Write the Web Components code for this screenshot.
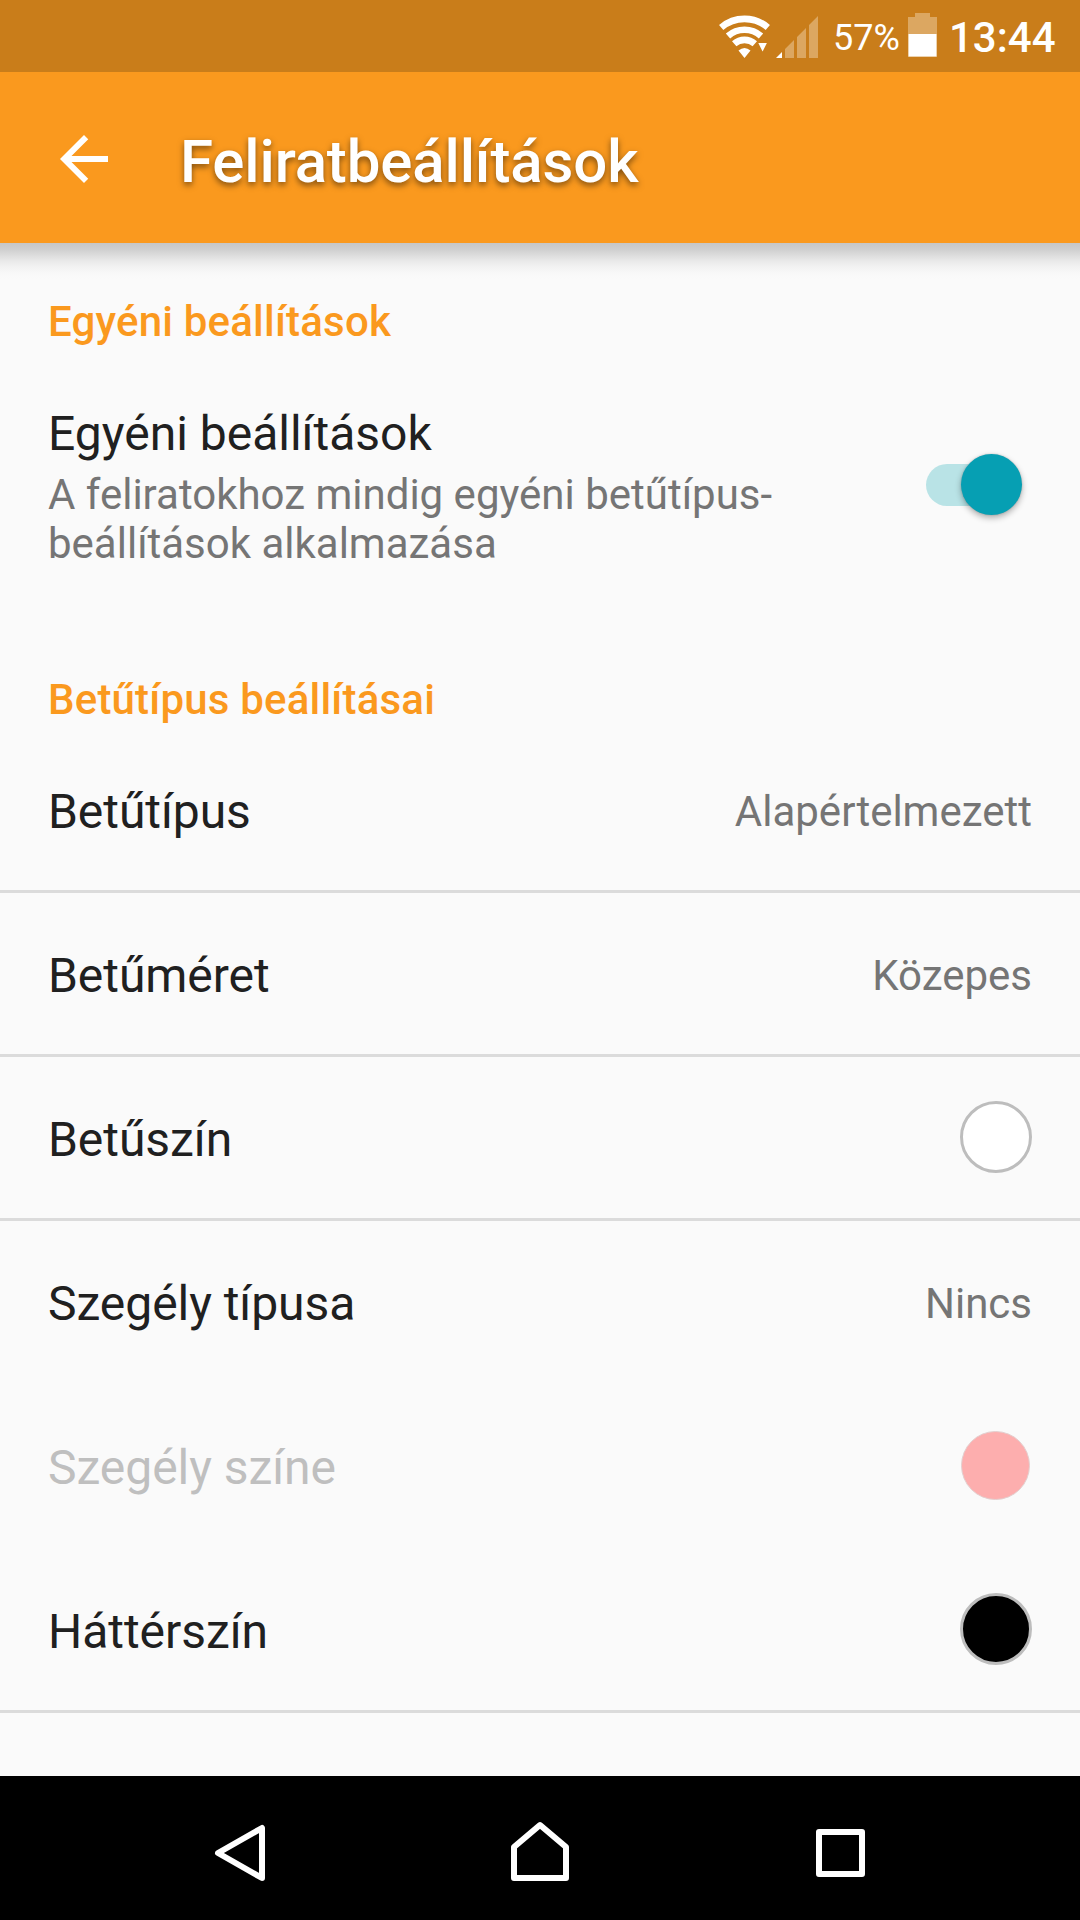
<!DOCTYPE html>
<html lang="hu">
<head>
<meta charset="utf-8">
<title>Feliratbeállítások</title>
<style>
html,body{margin:0;padding:0;background:#fafafa}
body{width:1080px;height:1920px;overflow:hidden;font-family:Roboto,"Noto Sans",sans-serif}
</style>
</head>
<body>
<settings-screen></settings-screen>
<script>
const define = (name, html) => customElements.define(name, class extends HTMLElement {
  constructor() {
    super();
    const t = document.createElement('template');
    t.innerHTML = html;
    this.attachShadow({mode: 'open'}).append(t.content.cloneNode(true));
  }
});

define('status-bar', `
<style>
:host{display:flex;align-items:flex-start;justify-content:flex-end;height:72px;background:#c97d1a;color:#fff;box-sizing:border-box;padding-right:25px}
svg{display:block;flex:none}
.pct{font-size:36px;line-height:42px;margin:17px 0 0 12px;width:65px;white-space:nowrap}
.time{font-size:42px;font-weight:500;line-height:50px;margin:13px 0 0 12px;width:106px;white-space:nowrap}
.bat{margin-left:10px}
</style>
<svg width="102" height="72" viewBox="719 0 102 72" fill="none">
  <g stroke="#fff" stroke-width="6.6">
    <path d="M721.2 27.4A36 36 0 0 1 767.8 27.4"/>
    <path d="M728 36A25 25 0 0 1 761 36"/>
    <path d="M734.2 43.8A15.500 15.500 0 0 1 754.800 43.800"/>
  </g>
  <path d="M738.500 50.500Q744.500 45.500 750.500 50.500L744.500 58Z" fill="#fff"/>
  <path d="M758.300 43h8.600l-4.300 8.500z" fill="#fff"/>
  <path d="M776 58l6-6v6z" fill="#fff"/>
  <path d="M785 49l9-9v18h-9zM797 37l9-9v30h-9zM809 25l9-9v42h-9z" fill="#dca761"/>
</svg>
<span class="pct">57%</span>
<svg class="bat" width="29" height="72" viewBox="908 0 29 72">
  <path d="M915 13h15v4h7v40h-29V17h7z" fill="#dca761"/>
  <path d="M908.500 34h28v22.500h-28z" fill="#fff"/>
</svg>
<span class="time">13:44</span>`);

define('app-bar', `
<style>
:host{display:flex;align-items:center;height:171px;background:#fa991e;color:#fff;padding-left:60px;box-sizing:border-box}
svg{display:block;flex:none;margin-top:3px}
h1{margin:8px 0 0 72px;font-size:60px;line-height:70px;font-weight:500;letter-spacing:-.13px;text-shadow:0 3px 6px rgba(0,0,0,.5);white-space:nowrap}
</style>
<svg width="48" height="48" viewBox="4 4 16 16"><path fill="#fff" d="M20 11H7.830l5.590-5.590L12 4l-8 8 8 8 1.410-1.410L7.830 13H20v-2z"/></svg>
<h1><slot></slot></h1>`);

define('section-title', `
<style>
:host{display:block;color:#fa991e;font-size:42px;line-height:49px;font-weight:500;letter-spacing:.19px;padding-left:48px;white-space:nowrap}
</style><slot></slot>`);

define('toggle-switch', `
<style>
:host{display:flex;align-items:center;width:96px;height:61px;flex:none;margin-bottom:5px}
.track{width:82px;height:42px;border-radius:21px;background:#b9e3e6;flex:none}
.thumb{width:61px;height:61px;border-radius:50%;background:#069fb3;margin-left:-47px;flex:none;box-shadow:0 3px 6px rgba(0,0,0,.3),0 0 2px rgba(0,0,0,.2)}
</style><div class="track"></div><div class="thumb"></div>`);

define('switch-preference', `
<style>
:host{display:flex;align-items:center;justify-content:space-between;padding:0 58px 0 48px}
.label{font-size:48px;line-height:56px;color:#202020;white-space:nowrap}
.summary{font-size:42px;line-height:49px;color:#757575;white-space:nowrap;margin-top:8px}
</style>
<div><div class="label"><slot name="label"></slot></div><div class="summary"><slot name="summary"></slot></div></div>
<toggle-switch></toggle-switch>`);

define('preference-row', `
<style>
:host{display:flex;align-items:center;justify-content:space-between;height:164px;box-sizing:border-box;padding:0 48px;border-bottom:3px solid transparent;font-size:48px;line-height:56px;color:#202020}
:host([divider]){border-bottom-color:#dbdbdb}
:host([disabled]){color:#bfbfbf}
.label{margin-top:4px;letter-spacing:-.05px;white-space:nowrap}
.value{font-size:42px;line-height:49px;color:#757575;margin-top:4px;white-space:nowrap}
</style>
<div class="label"><slot></slot></div><div class="value"><slot name="value"></slot></div><slot name="swatch"></slot>`);

define('color-swatch', `
<style>
:host{display:block;width:72px;height:72px;box-sizing:border-box;border-radius:50%;border:3px solid #bdbdbd;background:var(--swatch);margin-top:-1px}
:host([faded]){width:69px;height:69px;border:1px solid #e3d0d0;margin-right:2px}
</style>`);

define('nav-bar', `
<style>
:host{display:flex;justify-content:space-between;align-items:flex-start;height:144px;background:#000;box-sizing:border-box;padding:42px 210px 0}
svg{display:block}
</style>
<svg width="60" height="68" viewBox="210 1818 60 68" fill="none" stroke="#fff" stroke-width="6" stroke-linejoin="round"><path d="M262 1828V1878L218 1853Z"/></svg>
<svg width="60" height="68" viewBox="510 1818 60 68" fill="none" stroke="#fff" stroke-width="6" stroke-linejoin="round"><path d="M514 1878V1847L540 1825L566 1847V1878Z"/></svg>
<svg width="60" height="68" viewBox="810 1818 60 68" fill="none" stroke="#fff" stroke-width="6" stroke-linejoin="round"><path d="M819 1832H862V1874H819Z"/></svg>`);

define('settings-screen', `
<style>
:host{display:flex;flex-direction:column;width:1080px;height:1920px;background:#fafafa}
main{flex:1;display:flex;flex-direction:column;background:linear-gradient(#c6c6c6 0,#cecece 6px,#dcdcdc 12px,#e9e9e9 18px,#f2f2f2 24px,#f8f8f8 30px,#fafafa 36px)}
.first{margin-top:54px}
switch-preference{margin-top:60px}
.second{margin-top:107px}
.rows{margin-top:5px}
</style>
<status-bar></status-bar>
<app-bar>Feliratbeállítások</app-bar>
<main>
<section-title class="first">Egyéni beállítások</section-title>
<switch-preference><span slot="label">Egyéni beállítások</span><span slot="summary">A feliratokhoz mindig egyéni betűtípus-<br>beállítások alkalmazása</span></switch-preference>
<section-title class="second">Betűtípus beállításai</section-title>
<div class="rows">
<preference-row divider>Betűtípus<span slot="value">Alapértelmezett</span></preference-row>
<preference-row divider>Betűméret<span slot="value">Közepes</span></preference-row>
<preference-row divider>Betűszín<color-swatch slot="swatch" style="--swatch:#fff"></color-swatch></preference-row>
<preference-row>Szegély típusa<span slot="value">Nincs</span></preference-row>
<preference-row disabled>Szegély színe<color-swatch faded slot="swatch" style="--swatch:#fdaeae"></color-swatch></preference-row>
<preference-row divider>Háttérszín<color-swatch slot="swatch" style="--swatch:#000"></color-swatch></preference-row>
</div>
</main>
<nav-bar></nav-bar>`);
</script>
</body>
</html>
